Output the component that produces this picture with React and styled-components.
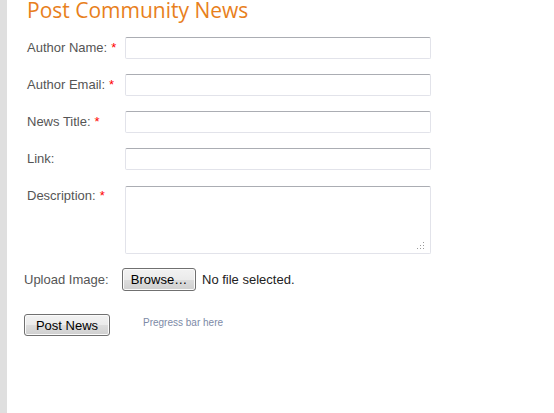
import React from "react";
import styled, { createGlobalStyle } from "styled-components";

const GlobalStyle = createGlobalStyle`
  html, body {
    margin: 0;
    padding: 0;
    background: #fff;
  }
  body {
    font-family: "Liberation Sans", Arial, sans-serif;
  }
`;

const fields = [
  { label: "Author Name:", required: true },
  { label: "Author Email:", required: true },
  { label: "News Title:", required: true },
  { label: "Link:", required: false },
  { label: "Description:", required: true, multiline: true },
];

function App() {
  return (
    <Page>
      <GlobalStyle />
      <Rail />
      <Content>
        <Title>Post Community News</Title>
        <Form onSubmit={(e) => e.preventDefault()}>
          {fields.map((f) => (
            <Row key={f.label} $indent={3}>
              <Label>
                {f.label}
                {f.required && <Required>*</Required>}
              </Label>
              {f.multiline ? (
                <AreaWrap>
                  <TextArea />
                  <Grip width="8" height="8" viewBox="0 0 8 8">
                    <rect x="6" y="0" width="1" height="1" />
                    <rect x="3" y="3" width="1" height="1" />
                    <rect x="6" y="3" width="1" height="1" />
                    <rect x="0" y="6" width="1" height="1" />
                    <rect x="3" y="6" width="1" height="1" />
                    <rect x="6" y="6" width="1" height="1" />
                  </Grip>
                </AreaWrap>
              ) : (
                <TextInput type="text" />
              )}
            </Row>
          ))}

          <UploadRow>
            <Label>Upload Image:</Label>
            <FileField>
              <Button type="button" $width={74} $height={23}>
                Browse…
              </Button>
              <FileName>No file selected.</FileName>
            </FileField>
          </UploadRow>

          <SubmitRow>
            <Button type="submit" $width={86} $height={22}>
              Post News
            </Button>
            <Progress>Pregress bar here</Progress>
          </SubmitRow>
        </Form>
      </Content>
    </Page>
  );
}

export default App;

const Page = styled.div`
  display: flex;
  min-height: 100vh;
`;

const Rail = styled.div`
  width: 7px;
  flex-shrink: 0;
  background: #dfdfdf;
`;

const Content = styled.div`
  flex: 1;
  padding-left: 17px;
`;

const Title = styled.h1`
  margin: 0 0 0 3px;
  font-family: "Open Sans", "Noto Sans", sans-serif;
  font-weight: 400;
  font-size: 21px;
  line-height: 21px;
  color: #e8801c;
`;

const Form = styled.form`
  margin-top: 16px;
  display: flex;
  flex-direction: column;
  gap: 15px;
`;

const Row = styled.div`
  display: grid;
  grid-template-columns: 98px 306px;
  align-items: start;
  padding-left: ${(p) => p.$indent || 0}px;
`;

const Label = styled.label`
  font-size: 13px;
  line-height: 22px;
  color: #555;
  white-space: nowrap;
`;

const Required = styled.span`
  color: #f00;
  margin-left: 4px;
`;

const fieldBorder = `
  box-sizing: border-box;
  width: 306px;
  margin: 0;
  border: 1px solid #e2e3ea;
  border-top-color: #abadb3;
  border-radius: 2px;
  background: #fff;
  font-family: "Liberation Sans", Arial, sans-serif;
  font-size: 13px;
  outline: none;
`;

const TextInput = styled.input`
  ${fieldBorder}
  height: 22px;
  padding: 2px 4px;
`;

const AreaWrap = styled.div`
  position: relative;
  width: 306px;
  height: 68px;
  margin-top: 1px;
`;

const TextArea = styled.textarea`
  ${fieldBorder}
  display: block;
  height: 68px;
  resize: none;
  padding: 3px 4px;
`;

const Grip = styled.svg`
  position: absolute;
  right: 6px;
  bottom: 4px;
  fill: #9a9a9a;
`;

const UploadRow = styled.div`
  display: grid;
  grid-template-columns: 98px auto;
  align-items: center;
  margin-top: -1px;
`;

const FileField = styled.div`
  display: flex;
  align-items: center;
  gap: 6px;
`;

const Button = styled.button`
  box-sizing: border-box;
  width: ${(p) => p.$width}px;
  height: ${(p) => p.$height}px;
  padding: 0;
  border: 1px solid #707070;
  border-radius: 3px;
  background: linear-gradient(
    to bottom,
    #f2f2f2 0%,
    #ebebeb 50%,
    #dddddd 51%,
    #cfcfcf 100%
  );
  box-shadow: inset 0 0 0 1px #fbfbfb;
  font-family: "Liberation Sans", Arial, sans-serif;
  font-size: 13px;
  color: #000;
  cursor: pointer;
`;

const FileName = styled.span`
  font-size: 13px;
  color: #222;
`;

const SubmitRow = styled.div`
  display: flex;
  align-items: flex-start;
  gap: 33px;
  margin-top: 8px;
`;

const Progress = styled.span`
  padding-top: 3px;
  font-size: 10px;
  color: #7d8aa6;
`;
